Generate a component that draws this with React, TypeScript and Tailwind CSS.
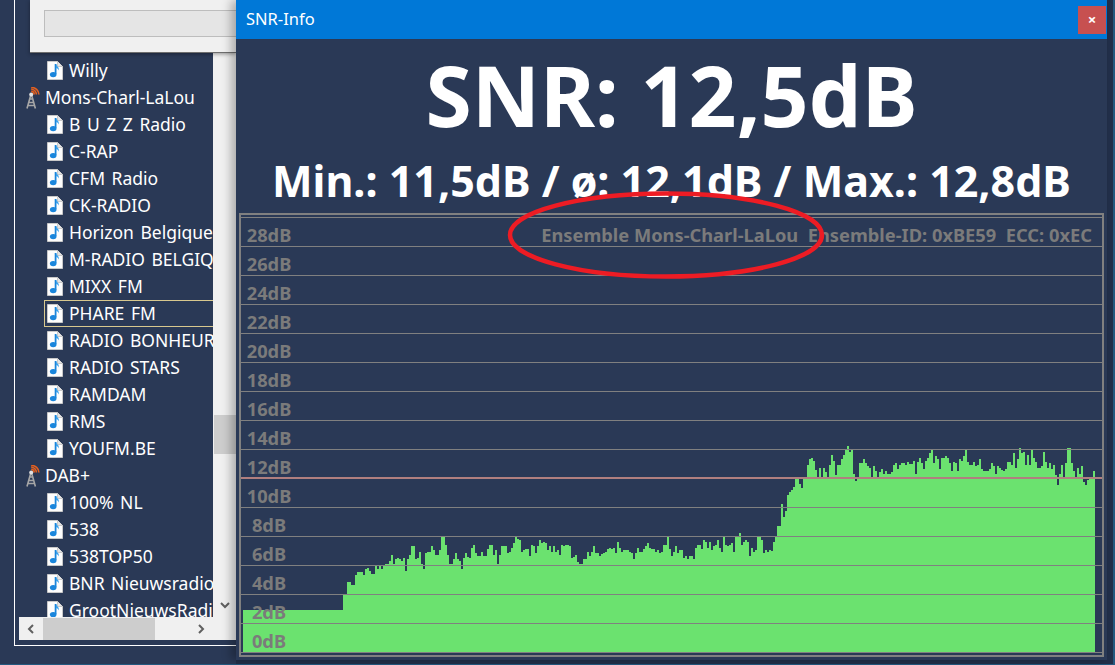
const SEGMENTS: { x: number; tops: number[] }[] = [
  { x: 243, tops: Array(50).fill(610) },
  { x: 343, tops: [595, 595] },
  {
    x: 347,
    tops: [582, 582, 585, 585, 575, 572, 572, 572, 575, 569, 568, 571, 574, 574, 566, 569, 566, 569, 566, 564, 564, 561, 555, 564, 559, 558, 559, 561, 558, 571, 559, 555, 546, 546, 559, 558, 552, 564, 569, 553, 552, 552, 546, 550, 555, 555, 550, 536, 536, 545, 555, 564, 564, 559, 553, 559, 561, 569, 558, 553, 557, 558, 548, 545, 553, 556, 556, 552, 556, 556, 549, 545, 545, 555, 550, 564, 555, 546, 546, 546, 553, 552, 548, 543, 537, 539],
  },
  {
    x: 519,
    tops: [540, 552, 550, 549, 549, 556, 545, 546, 553, 546, 540, 543, 542, 543, 550, 546, 552, 546, 552, 550, 555, 545, 546, 545, 545, 546, 558, 557, 555, 562, 564, 564, 559, 559, 552, 556, 552, 546, 553, 553, 556, 554, 553, 552, 549, 548, 549, 548, 553, 542, 548, 552, 550, 550, 550, 552, 553, 559, 553, 548, 552, 552, 549, 546, 543, 548, 549, 549, 552, 550, 553, 552, 545, 545, 537, 549, 556, 552, 546, 553, 550, 550, 558, 556, 559, 556, 556, 559, 548, 545, 545, 549, 540, 542, 548, 542, 550, 546, 545, 540, 548, 552, 537, 545, 546, 545, 543, 552, 537, 537, 533, 545, 542, 540, 542, 556, 548, 552, 550, 536, 537, 540, 553, 550, 552, 550, 551, 542, 537],
  },
  {
    x: 777,
    tops: [526, 526, 504, 517, 511, 495, 492, 490, 487, 479, 479, 484, 488, 479, 479, 465, 459, 458, 461, 470, 477, 468, 477, 468, 472, 477, 465, 455, 461, 475, 465, 465, 459, 455, 450, 446, 452, 450, 474, 481, 477, 463, 463, 459, 463, 466, 468, 477, 466, 471, 477, 472, 469, 474, 471, 474, 474, 472, 465, 463, 469, 465, 463, 463, 465, 462, 464, 464, 461, 474, 462, 458, 463, 469, 461, 458, 453, 450, 463, 456, 459, 469, 458, 458, 456, 458, 463, 471, 462, 463, 471, 459, 461, 456, 450, 462, 465, 465, 462, 466, 465, 459, 469, 471, 471, 471, 469, 463, 466, 474, 466, 468, 470, 471, 469, 462, 462, 465, 453, 468, 459, 448, 453, 452, 465, 455, 465, 450, 458, 462, 468, 468, 466, 452, 462, 468, 463, 469, 465, 475, 485, 474, 465, 479, 463, 448, 448, 463, 471, 477, 468, 474, 466, 482, 485, 480, 479, 479, 471],
  },
];

// offsets: the svg sits inside the chart border at (241, 215)
function barsPath() {
  let d = "";
  for (const seg of SEGMENTS) {
    seg.tops.forEach((top, i) => {
      d += `M${seg.x - 241 + i * 2} ${top - 215}h2V${652 - 215}h-2z`;
    });
  }
  return d;
}

const ROWS = ["28dB", "26dB", "24dB", "22dB", "20dB", "18dB", "16dB", "14dB", "12dB", "10dB", "8dB", "6dB", "4dB", "2dB", "0dB"];

type Item = { name: string; group?: boolean; selected?: boolean };

const ITEMS: Item[] = [
  { name: "Willy" },
  { name: "Mons-Charl-LaLou", group: true },
  { name: "B U Z Z Radio" },
  { name: "C-RAP" },
  { name: "CFM Radio" },
  { name: "CK-RADIO" },
  { name: "Horizon Belgique" },
  { name: "M-RADIO BELGIQUE" },
  { name: "MIXX FM" },
  { name: "PHARE FM", selected: true },
  { name: "RADIO BONHEUR" },
  { name: "RADIO STARS" },
  { name: "RAMDAM" },
  { name: "RMS" },
  { name: "YOUFM.BE" },
  { name: "DAB+", group: true },
  { name: "100% NL" },
  { name: "538" },
  { name: "538TOP50" },
  { name: "BNR Nieuwsradio" },
  { name: "GrootNieuwsRadio" },
];

function NoteIcon() {
  return (
    <svg width="16" height="19" viewBox="0 0 16 19" className="shrink-0">
      <path d="M0.5 0.5H10.5L15.5 5.5V18.5H0.5Z" fill="#fdfdfd" stroke="#c9c9c9" />
      <path d="M10.5 0.5V5.5H15.5" fill="#e4e4e4" stroke="#c9c9c9" />
      <path d="M8.6 3V13" stroke="#1a86dc" strokeWidth="1.8" fill="none" />
      <ellipse cx="6.2" cy="13.6" rx="3.3" ry="2.7" fill="#1a86dc" />
      <path d="M9 3C9.6 5.6 12.8 6 11.6 9.6C11.4 7.8 10.2 7.2 9 7Z" fill="#3aa0ea" />
    </svg>
  );
}

function TowerIcon() {
  return (
    <svg width="14" height="22" viewBox="0 0 14 22" className="shrink-0">
      <path d="M4.8 8L1 21.5M5.6 8L9.4 21.5M2.6 15.5H7.8M1.8 18.5H8.6M3.8 12H6.6" stroke="#a6a6a6" strokeWidth="1.6" fill="none" />
      <circle cx="5.2" cy="7.4" r="2" fill="#e2e2e2" />
      <path d="M5.2 4.4A3 3 0 0 1 8.2 7.4M5.2 2.2A5.2 5.2 0 0 1 10.4 7.4M5.2 0.6A6.9 6.9 0 0 1 12.9 7.4" stroke="#e4601f" strokeWidth="1.6" fill="none" />
    </svg>
  );
}

function Chevron({ d }: { d: string }) {
  return (
    <svg width="10" height="10" viewBox="0 0 10 10">
      <path d={d} stroke="#606060" strokeWidth="2" fill="none" />
    </svg>
  );
}

function StationList() {
  return (
    <div className="flex-1 min-w-0 overflow-hidden pt-[57px] text-[17.5px] [word-spacing:2px] text-white">
      {ITEMS.map((item) => (
        <div
          key={item.name}
          className={
            item.group
              ? "flex items-center h-[27px] pl-[7px] gap-[5px] whitespace-nowrap"
              : item.selected
                ? "flex items-center h-[27px] ml-[25px] pl-[2px] gap-[6px] whitespace-nowrap border border-r-0 border-[#d8c88e]"
                : "flex items-center h-[27px] pl-[28px] gap-[6px] whitespace-nowrap"
          }
        >
          {item.group ? <TowerIcon /> : <NoteIcon />}
          <span>{item.name}</span>
        </div>
      ))}
    </div>
  );
}

function LeftPane() {
  return (
    <div className="relative w-[236px] h-[664px] shrink-0 bg-[#2a3956] pl-[14px]">
      <div className="h-[646px] flex flex-col border-l border-b border-white pl-[4px] pb-[5px]">
        <div className="flex-1 min-h-0 flex">
          <StationList />
          <div className="w-[23px] shrink-0 flex flex-col bg-[#f0f0f0]">
            <div className="h-[415px]" />
            <div className="h-[39px] ml-px bg-[#cdcdcd]" />
            <div className="mt-auto mb-[7px] flex justify-center">
              <Chevron d="M1 3L5 7L9 3" />
            </div>
          </div>
        </div>
        <div className="h-[23px] shrink-0 flex items-center bg-[#f0f0f0]">
          <div className="w-[24px] flex justify-center">
            <Chevron d="M7 1L3 5L7 9" />
          </div>
          <div className="w-[112px] h-[22px] mt-px bg-[#cdcdcd]" />
          <div className="ml-[41px]">
            <Chevron d="M3 1L7 5L3 9" />
          </div>
        </div>
      </div>
      {/* dialog lying over the list */}
      <div className="absolute left-[30px] top-0 w-[206px] h-[53px] pl-[14px] pt-[10px] bg-[#f0f0f0] border-b border-[#6e6e6e] shadow-[0_1px_4px_rgba(0,0,0,0.4)]">
        <div className="h-[27px] bg-[#e5e5e5] border border-r-0 border-[#bdbdbd]" />
      </div>
    </div>
  );
}

function Chart() {
  return (
    <div className="relative mt-[4px] ml-[3px] mr-[3px] h-[444px] border-2 border-[#808080] pt-[2px] font-['Noto_Sans',sans-serif] font-bold text-[18.3px] text-[#7b7b7b]">
      <svg className="absolute inset-0" width="861" height="440" shapeRendering="crispEdges">
        <path d={barsPath()} fill="#6be26f" />
      </svg>
      <div className="relative border-t border-[#808080]">
        {ROWS.map((label, i) => (
          <div
            key={label}
            className={
              label === "12dB"
                ? "h-[29px] flex items-end justify-between border-b-2 border-[#b07f7f] pr-[10px]"
                : "h-[29px] flex items-end justify-between border-b border-[#808080] pr-[10px]"
            }
          >
            <span
              className={
                label === "12dB"
                  ? "w-[50px] ml-[3px] mb-[-1px] text-center leading-[22px]"
                  : "w-[50px] ml-[3px] text-center leading-[22px]"
              }
            >
              {label}
            </span>
            {i === 0 && (
              <span className="leading-[22px] whitespace-pre">
                {"Ensemble Mons-Charl-LaLou  Ensemble-ID: 0xBE59  ECC: 0xEC"}
              </span>
            )}
          </div>
        ))}
      </div>
    </div>
  );
}

function SnrWindow() {
  return (
    <div className="relative z-10 w-[877px] h-[664px] shrink-0 bg-[#222f4a]">
      <div className="w-[871px] h-[660px] flex flex-col bg-[#2a3956] shadow-[-5px_0_9px_rgba(0,0,0,0.28)]">
        <div className="h-[39px] shrink-0 flex items-center justify-between pl-[10px] pr-px bg-[#0078d7] text-white">
          <span className="text-[16.5px]">SNR-Info</span>
          <div className="w-[28px] h-[28px] flex items-center justify-center bg-[#c75050] text-[15px] font-bold leading-none">
            ×
          </div>
        </div>
        <div className="h-[112px] shrink-0 flex items-center justify-center text-white text-[84px] font-bold leading-none whitespace-nowrap">
          SNR: 12,5dB
        </div>
        <div className="h-[58px] shrink-0 flex items-center justify-center text-white text-[43px] font-bold leading-none whitespace-nowrap">
          Min.: 11,5dB / ø: 12,1dB / Max.: 12,8dB
        </div>
        <Chart />
      </div>
    </div>
  );
}

export default function App() {
  return (
    <div className="relative w-[1115px] h-[665px] overflow-hidden flex bg-[#24597f] font-['Noto_Sans',sans-serif]">
      <LeftPane />
      <SnrWindow />
      {/* red marker drawn on the screenshot */}
      <svg className="absolute left-[500px] top-[185px] z-20" width="330" height="100">
        <ellipse cx="166" cy="50" rx="156" ry="41.5" fill="none" stroke="#ed1c24" strokeWidth="4.5" />
      </svg>
    </div>
  );
}
